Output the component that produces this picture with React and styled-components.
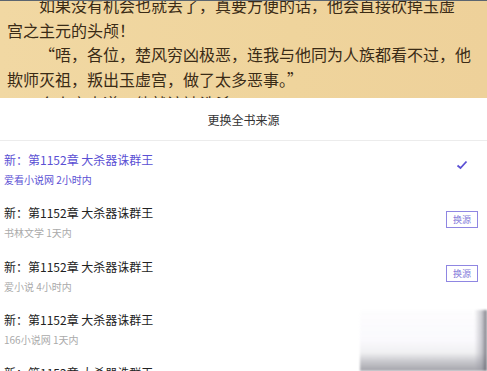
import React from 'react'
import styled, { createGlobalStyle } from 'styled-components'

const Global = createGlobalStyle`
  html, body {
    margin: 0;
    padding: 0;
  }
  body {
    width: 487px;
    height: 371px;
    overflow: hidden;
    font-family: "Noto Sans CJK SC", "Noto Sans", sans-serif;
    background: #fff;
  }
`

const Screen = styled.div`
  position: relative;
  width: 487px;
  height: 371px;
  overflow: hidden;
`

const Reader = styled.div`
  height: 98px;
  overflow: hidden;
  background: linear-gradient(90deg, #f1d8a3 0%, #efd49c 60%, #eed19a 100%);
  border-top: 1px solid #5b6570;
  box-sizing: border-box;
`

const ReaderText = styled.div`
  margin-top: -8px;
  padding: 0 7px;
  font-size: 16px;
  line-height: 24.5px;
  color: #3a2b16;

  p {
    margin: 0;
    white-space: nowrap;
  }

  p.indent {
    text-indent: 32px;
  }
`

const Sheet = styled.div`
  background: #fff;
`

const SheetHeader = styled.div`
  height: 43px;
  display: flex;
  align-items: center;
  justify-content: center;
  font-size: 12px;
  color: #333;
  border-bottom: 1px solid #ececec;
  box-sizing: border-box;
`

const Row = styled.div`
  height: 53.3px;
  display: flex;
  align-items: flex-start;
  padding: 0 9px 0 4px;
  box-sizing: border-box;
`

const RowText = styled.div`
  flex: 1;
  display: flex;
  flex-direction: column;
`

const Title = styled.div`
  margin-top: 11px;
  font-size: 12px;
  line-height: 16px;
  color: ${p => (p.$active ? '#5b50d4' : '#222')};
  white-space: nowrap;
`

const Sub = styled.div`
  margin-top: 5px;
  font-size: 10px;
  line-height: 14px;
  color: ${p => (p.$active ? '#5b50d4' : '#aaa')};
  white-space: nowrap;
`

const Trail = styled.div`
  width: 32px;
  margin-top: ${p => p.$top}px;
  display: flex;
  justify-content: center;
`

const SwapButton = styled.div`
  width: 32px;
  height: 17px;
  border: 1px solid #8f86e2;
  box-sizing: border-box;
  display: flex;
  align-items: center;
  justify-content: center;
  font-size: 9px;
  color: #8279d9;
`

const Blur = styled.div`
  position: absolute;
  left: 360px;
  top: 310px;
  width: 127px;
  height: 61px;
  background:
    linear-gradient(90deg, rgba(255, 255, 255, 0) 90%, rgba(150, 150, 160, 0.5) 96%, rgba(90, 90, 100, 0.8) 100%),
    linear-gradient(180deg, rgba(252, 252, 253, 0.5) 0%, #faf9fd 50%, #f0f0f2 70%, #c9c9ce 84%, #a4a4ab 100%);
  filter: blur(1px);
`

const sources = [
  { name: '爱看小说网', time: '2小时内', active: true },
  { name: '书林文学', time: '1天内', swap: true },
  { name: '爱小说', time: '4小时内', swap: true },
  { name: '166小说网', time: '1天内' },
  { name: '爱看书吧', time: '1天内' },
]

function Check() {
  return (
    <svg width="12" height="10" viewBox="0 0 12 10">
      <path d="M1.5 5.5 L4.5 8 L10.5 1.5" fill="none" stroke="#5b50d4" strokeWidth="1.8" />
    </svg>
  )
}

export default function App() {
  return (
    <Screen>
      <Global />
      <Reader>
        <ReaderText>
          <p className="indent">如果没有机会也就丢了，真要方便的话，他会直接砍掉玉虚</p>
          <p>宫之主元的头颅！</p>
          <p className="indent">“唔，各位，楚风穷凶极恶，连我与他同为人族都看不过，他</p>
          <p>欺师灭祖，叛出玉虚宫，做了太多恶事。”</p>
          <p className="indent">众人齐声道，他就该被诛杀。</p>
        </ReaderText>
      </Reader>
      <Sheet>
        <SheetHeader>更换全书来源</SheetHeader>
        {sources.map((s, i) => (
          <Row key={i}>
            <RowText>
              <Title $active={s.active}>新：第1152章 大杀器诛群王</Title>
              <Sub $active={s.active}>{s.name} {s.time}</Sub>
            </RowText>
            {s.active && <Trail $top={19}><Check /></Trail>}
            {s.swap && <Trail $top={17}><SwapButton>换源</SwapButton></Trail>}
          </Row>
        ))}
      </Sheet>
      <Blur />
    </Screen>
  )
}
